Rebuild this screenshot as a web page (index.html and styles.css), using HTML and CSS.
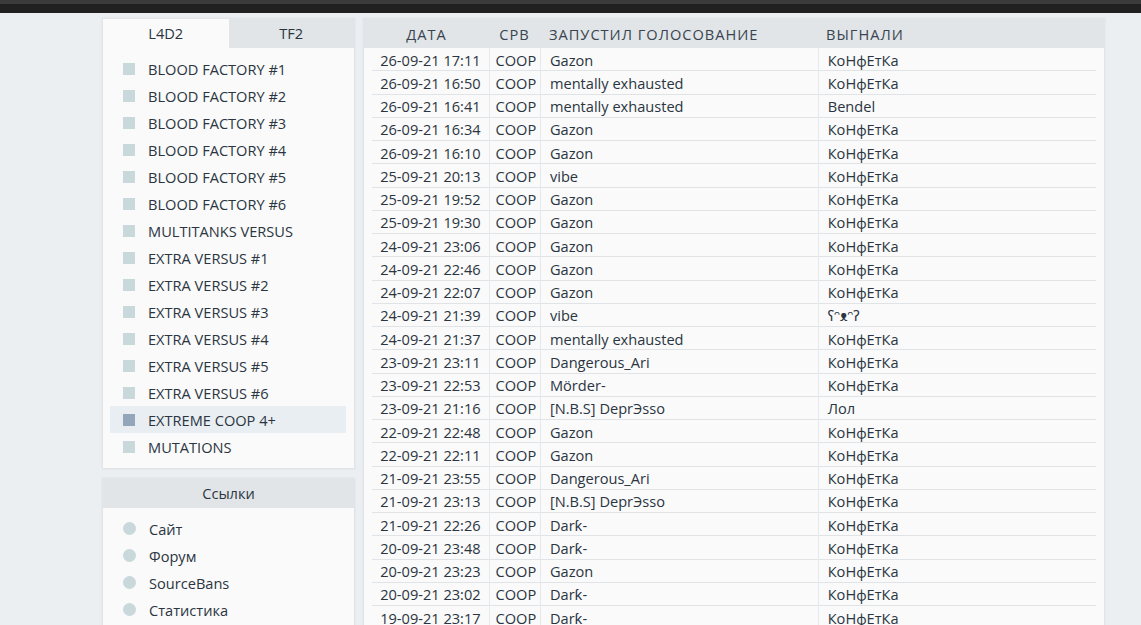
FILE: index.html
```html
<!DOCTYPE html>
<html lang="ru">
<head>
<meta charset="utf-8">
<title>Голосования</title>
<link rel="stylesheet" href="styles.css">
</head>
<body>
<div class="topbar"></div>
<div class="page">
  <aside class="sidebar">
    <section class="panel">
      <div class="tabs">
        <div class="tab active">L4D2</div>
        <div class="tab">TF2</div>
      </div>
      <ul class="list">
        <li class="item"><span class="mark"></span>BLOOD FACTORY #1</li>
        <li class="item"><span class="mark"></span>BLOOD FACTORY #2</li>
        <li class="item"><span class="mark"></span>BLOOD FACTORY #3</li>
        <li class="item"><span class="mark"></span>BLOOD FACTORY #4</li>
        <li class="item"><span class="mark"></span>BLOOD FACTORY #5</li>
        <li class="item"><span class="mark"></span>BLOOD FACTORY #6</li>
        <li class="item"><span class="mark"></span>MULTITANKS VERSUS</li>
        <li class="item"><span class="mark"></span>EXTRA VERSUS #1</li>
        <li class="item"><span class="mark"></span>EXTRA VERSUS #2</li>
        <li class="item"><span class="mark"></span>EXTRA VERSUS #3</li>
        <li class="item"><span class="mark"></span>EXTRA VERSUS #4</li>
        <li class="item"><span class="mark"></span>EXTRA VERSUS #5</li>
        <li class="item"><span class="mark"></span>EXTRA VERSUS #6</li>
        <li class="item selected"><span class="mark"></span>EXTREME COOP 4+</li>
        <li class="item"><span class="mark"></span>MUTATIONS</li>
      </ul>
    </section>
    <section class="panel">
      <div class="panel-head">Ссылки</div>
      <ul class="list links">
        <li class="item"><span class="mark dot"></span>Сайт</li>
        <li class="item"><span class="mark dot"></span>Форум</li>
        <li class="item"><span class="mark dot"></span>SourceBans</li>
        <li class="item"><span class="mark dot"></span>Статистика</li>
      </ul>
    </section>
  </aside>
  <main class="panel content">
    <div class="votes-head">
      <div class="h-date">ДАТА</div>
      <div class="h-srv">СРВ</div>
      <div class="h-who">ЗАПУСТИЛ ГОЛОСОВАНИЕ</div>
      <div class="h-kick">ВЫГНАЛИ</div>
    </div>
    <div class="rows">
      <table class="votes">
        <colgroup>
          <col class="w-date"><col class="w-srv"><col class="w-who"><col class="w-kick">
        </colgroup>
        <tbody>
          <tr><td class="c-date">26-09-21 17:11</td><td class="c-srv">COOP</td><td>Gazon</td><td>КоНфЕтКа</td></tr>
          <tr><td class="c-date">26-09-21 16:50</td><td class="c-srv">COOP</td><td>mentally exhausted</td><td>КоНфЕтКа</td></tr>
          <tr><td class="c-date">26-09-21 16:41</td><td class="c-srv">COOP</td><td>mentally exhausted</td><td>Bendel</td></tr>
          <tr><td class="c-date">26-09-21 16:34</td><td class="c-srv">COOP</td><td>Gazon</td><td>КоНфЕтКа</td></tr>
          <tr><td class="c-date">26-09-21 16:10</td><td class="c-srv">COOP</td><td>Gazon</td><td>КоНфЕтКа</td></tr>
          <tr><td class="c-date">25-09-21 20:13</td><td class="c-srv">COOP</td><td>vibe</td><td>КоНфЕтКа</td></tr>
          <tr><td class="c-date">25-09-21 19:52</td><td class="c-srv">COOP</td><td>Gazon</td><td>КоНфЕтКа</td></tr>
          <tr><td class="c-date">25-09-21 19:30</td><td class="c-srv">COOP</td><td>Gazon</td><td>КоНфЕтКа</td></tr>
          <tr><td class="c-date">24-09-21 23:06</td><td class="c-srv">COOP</td><td>Gazon</td><td>КоНфЕтКа</td></tr>
          <tr><td class="c-date">24-09-21 22:46</td><td class="c-srv">COOP</td><td>Gazon</td><td>КоНфЕтКа</td></tr>
          <tr><td class="c-date">24-09-21 22:07</td><td class="c-srv">COOP</td><td>Gazon</td><td>КоНфЕтКа</td></tr>
          <tr><td class="c-date">24-09-21 21:39</td><td class="c-srv">COOP</td><td>vibe</td><td>ʕᵔᴥᵔʔ</td></tr>
          <tr><td class="c-date">24-09-21 21:37</td><td class="c-srv">COOP</td><td>mentally exhausted</td><td>КоНфЕтКа</td></tr>
          <tr><td class="c-date">23-09-21 23:11</td><td class="c-srv">COOP</td><td>Dangerous_Ari</td><td>КоНфЕтКа</td></tr>
          <tr><td class="c-date">23-09-21 22:53</td><td class="c-srv">COOP</td><td>Mörder-</td><td>КоНфЕтКа</td></tr>
          <tr><td class="c-date">23-09-21 21:16</td><td class="c-srv">COOP</td><td>[N.B.S] DeprЭsso</td><td>Лол</td></tr>
          <tr><td class="c-date">22-09-21 22:48</td><td class="c-srv">COOP</td><td>Gazon</td><td>КоНфЕтКа</td></tr>
          <tr><td class="c-date">22-09-21 22:11</td><td class="c-srv">COOP</td><td>Gazon</td><td>КоНфЕтКа</td></tr>
          <tr><td class="c-date">21-09-21 23:55</td><td class="c-srv">COOP</td><td>Dangerous_Ari</td><td>КоНфЕтКа</td></tr>
          <tr><td class="c-date">21-09-21 23:13</td><td class="c-srv">COOP</td><td>[N.B.S] DeprЭsso</td><td>КоНфЕтКа</td></tr>
          <tr><td class="c-date">21-09-21 22:26</td><td class="c-srv">COOP</td><td>Darƙ-</td><td>КоНфЕтКа</td></tr>
          <tr><td class="c-date">20-09-21 23:48</td><td class="c-srv">COOP</td><td>Darƙ-</td><td>КоНфЕтКа</td></tr>
          <tr><td class="c-date">20-09-21 23:23</td><td class="c-srv">COOP</td><td>Gazon</td><td>КоНфЕтКа</td></tr>
          <tr><td class="c-date">20-09-21 23:02</td><td class="c-srv">COOP</td><td>Darƙ-</td><td>КоНфЕтКа</td></tr>
          <tr><td class="c-date">19-09-21 23:17</td><td class="c-srv">COOP</td><td>Darƙ-</td><td>КоНфЕтКа</td></tr>
          <tr><td class="c-date">19-09-21 22:40</td><td class="c-srv">COOP</td><td>Gazon</td><td>КоНфЕтКа</td></tr>
        </tbody>
      </table>
    </div>
  </main>
</div>
</body>
</html>
```

FILE: styles.css
```css
html {
  overflow: hidden;
}

body {
  margin: 0;
  background: #ebeff2;
  color: #2b3541;
  font-family: "Open Sans", "Noto Sans", sans-serif;
  font-size: 14.6px;
}

.topbar {
  height: 9px;
  background: #202020;
  border-top: 4px solid #3b3b3b;
}

.page {
  display: flex;
  align-items: flex-start;
  gap: 8px;
  padding: 5px 0 0 102px;
}

.sidebar {
  width: 253px;
  display: flex;
  flex-direction: column;
  gap: 9px;
}

.panel {
  background: #fafafa;
  border: 1px solid #e0e5e8;
  box-shadow: 0 0 2px rgba(60, 80, 100, 0.08);
}

/* Game tabs */
.tabs {
  display: flex;
}

.tab {
  flex: 1;
  height: 29px;
  line-height: 29px;
  text-align: center;
  background: #e1e5e8;
}

.tab.active {
  background: #fafafa;
}

.panel-head {
  height: 29px;
  line-height: 29px;
  text-align: center;
  background: #e1e5e8;
}

/* Server and link lists */
.list {
  list-style: none;
  margin: 0;
  padding: 7px 8px 8px 7px;
}

.links {
  padding-top: 7px;
}

.item {
  display: flex;
  align-items: center;
  gap: 13px;
  height: 27px;
  padding-left: 13px;
  white-space: nowrap;
}

.item.selected {
  background: #e9eef2;
}

.mark {
  width: 12px;
  height: 12px;
  flex: none;
  background: #c9d8da;
}

.item.selected .mark {
  background: #94a7ba;
}

.mark.dot {
  width: 13px;
  height: 13px;
  border-radius: 50%;
}

/* Vote log */
.content {
  width: 740px;
}

.votes-head {
  display: grid;
  grid-template-columns: 8px 117px 51px 277px 277px 8px;
  height: 29px;
  align-items: center;
  background: #e1e5e8;
  color: #394450;
  letter-spacing: 1px;
}

.h-date {
  grid-column: 2;
  text-align: center;
  padding-right: 8px;
}

.h-srv {
  grid-column: 3;
  text-align: center;
}

.h-who,
.h-kick {
  padding-left: 9px;
}

.rows {
  padding: 0 8px;
}

.votes {
  width: 100%;
  table-layout: fixed;
  border-collapse: collapse;
}

.w-date { width: 117px; }
.w-srv { width: 51px; }
.w-who { width: 277px; }
.w-kick { width: 277px; }

.votes tr {
  box-shadow: inset 0 -1px 0 #e0e4e7;
}

.votes td {
  height: 23.25px;
  padding: 0 9px;
  line-height: 18px;
  white-space: nowrap;
  overflow: hidden;
  border-left: 1px solid #e6e9ec;
}

.votes td:first-child {
  border-left: none;
}

.votes .c-date {
  text-align: center;
  padding: 0 4px;
}

.votes .c-srv {
  text-align: center;
  padding: 0 2px 0 4px;
}
```
